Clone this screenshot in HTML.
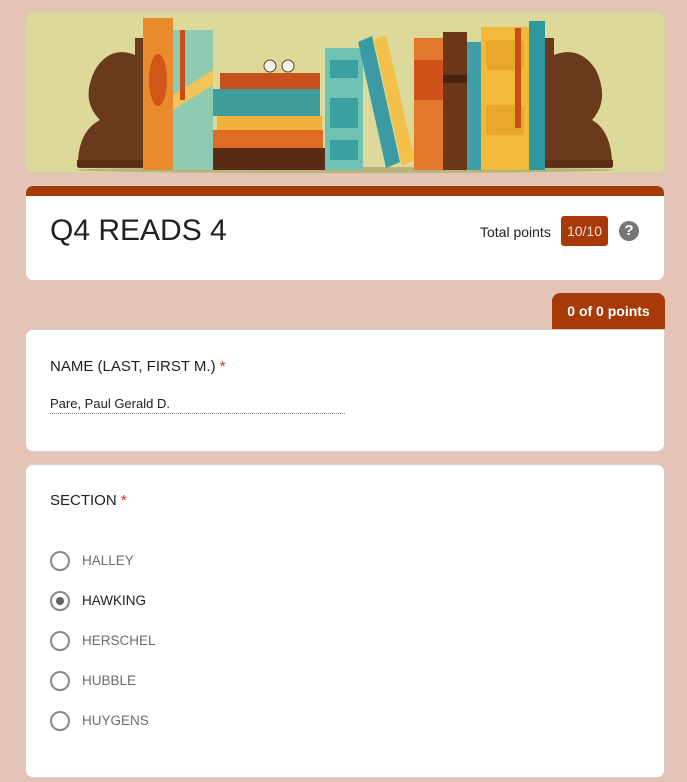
<!DOCTYPE html><html><head><style>
body{margin:0;background:#e4c4b7;font-family:"Liberation Sans",sans-serif;width:687px;height:782px;overflow:hidden;position:relative}
.card{position:absolute;left:25px;width:638px;background:#fff;border:1px solid #d8ccc6;border-radius:8px}
.abs{position:absolute}
.radio{position:absolute;left:50px;width:16px;height:16px;border:2px solid #888;border-radius:50%}
.lbl{position:absolute;left:82px;font-size:13.5px;color:#6d6d6d}
</style></head><body>
<svg class="abs" style="left:24px;top:11px" width="642" height="163" viewBox="24 11 642 163">
<rect x="25" y="12" width="640" height="161" rx="8" fill="#ddd99a" stroke="#d0ccb0"/>
<ellipse cx="345" cy="170" rx="270" ry="3" fill="#b9b27a"/>
<path d="M135 38 H145 V168 H78 V160 Q80 130 100 120 Q80 100 95 70 Q110 45 135 55Z" fill="#6b3a1c"/>
<rect x="77" y="160" width="68" height="7" fill="#5a2f16"/>
<rect x="143" y="18" width="30" height="152" fill="#e98a2c"/><ellipse cx="158" cy="80" rx="9" ry="26" fill="#d2561a"/>
<rect x="173" y="30" width="40" height="140" fill="#8fcbb0"/><path d="M173 95 L213 70 V85 L173 110Z" fill="#f2c45a"/><rect x="180" y="30" width="5" height="70" fill="#c94d17"/>
<rect x="213" y="148" width="112" height="22" fill="#5a2b17"/>
<rect x="213" y="130" width="110" height="18" fill="#e06b23"/>
<rect x="217" y="116" width="105" height="14" fill="#f0b23c"/>
<rect x="213" y="89" width="107" height="27" fill="#3f9e9c"/>
<rect x="220" y="73" width="100" height="16" fill="#c9501c"/>
<circle cx="270" cy="66" r="6" fill="#f4f4ee" stroke="#6a3a1a"/><circle cx="288" cy="66" r="6" fill="#f4f4ee" stroke="#6a3a1a"/>
<rect x="325" y="48" width="38" height="122" fill="#6ec3b2"/><rect x="330" y="60" width="28" height="18" fill="#3aa0a0"/><rect x="330" y="98" width="28" height="30" fill="#3aa0a0"/><rect x="330" y="140" width="28" height="20" fill="#3aa0a0"/>
<path d="M358 42 L372 36 L400 162 L386 168Z" fill="#3c9aa4"/>
<path d="M374 40 L386 35 L415 160 L402 166Z" fill="#f3c04c"/>
<rect x="414" y="38" width="29" height="132" fill="#e3772a"/><rect x="414" y="60" width="29" height="40" fill="#d0521a"/>
<rect x="443" y="32" width="24" height="138" fill="#6b3619"/><rect x="443" y="75" width="24" height="8" fill="#4a220f"/>
<rect x="467" y="42" width="14" height="128" fill="#3f9fa6"/>
<rect x="481" y="27" width="48" height="143" fill="#f2b93a"/><rect x="486" y="40" width="38" height="30" rx="4" fill="#e8a62a"/><rect x="486" y="105" width="38" height="30" rx="4" fill="#e8a62a"/><rect x="515" y="28" width="6" height="100" fill="#c94d17"/>
<rect x="529" y="21" width="16" height="149" fill="#2f97a0"/>
<path d="M554 38 H545 V168 H612 V160 Q610 130 592 120 Q610 100 596 70 Q580 45 554 55Z" fill="#6b3a1c"/>
<rect x="545" y="160" width="68" height="7" fill="#5a2f16"/>
</svg>
<div class="card" style="top:185px;height:94px;overflow:hidden">
<div class="abs" style="left:0;top:0;width:100%;height:10px;background:#a83a0a"></div>
<div class="abs" style="left:24px;top:28px;font-size:30px;color:#202124">Q4 READS 4</div>
<div class="abs" style="left:454px;top:38px;font-size:14px;color:#202124">Total points</div>
<div class="abs" style="left:535px;top:30px;width:47px;height:30px;background:#a83a0a;border-radius:3px;color:#f3ddd3;font-size:14px;line-height:30px;text-align:center">10/10</div>
<div class="abs" style="left:593px;top:35px;width:20px;height:20px;border-radius:50%;background:#767676;color:#fff;font-weight:bold;font-size:15px;line-height:20px;text-align:center">?</div>
</div>
<div class="abs" style="left:552px;top:293px;width:113px;height:38px;background:#a83a0a;border-radius:8px 8px 0 0;color:#fff;font-weight:bold;font-size:14px;line-height:36px;text-align:center">0 of 0 points</div>
<div class="card" style="top:329px;height:121px;border-top-right-radius:0">
<div class="abs" style="left:24px;top:28px;font-size:15px;color:#202124">NAME (LAST, FIRST M.) <span style="color:#d93025">*</span></div>
<div class="abs" style="left:24px;top:66px;width:295px;font-size:13px;color:#202124;padding-bottom:2px;border-bottom:1px dotted #888">Pare, Paul Gerald D.</div>
</div>
<div class="card" style="top:464px;height:312px">
<div class="abs" style="left:24px;top:27px;font-size:15px;color:#202124">SECTION <span style="color:#d93025">*</span></div>
</div>
<div class="radio" style="top:551px"></div><div class="lbl" style="top:553px">HALLEY</div>
<div class="radio" style="top:591px"></div><div class="abs" style="left:56px;top:597px;width:8px;height:8px;border-radius:50%;background:#5f6368"></div><div class="lbl" style="top:593px;color:#202124">HAWKING</div>
<div class="radio" style="top:631px"></div><div class="lbl" style="top:633px">HERSCHEL</div>
<div class="radio" style="top:671px"></div><div class="lbl" style="top:673px">HUBBLE</div>
<div class="radio" style="top:711px"></div><div class="lbl" style="top:713px">HUYGENS</div>
</body></html>
